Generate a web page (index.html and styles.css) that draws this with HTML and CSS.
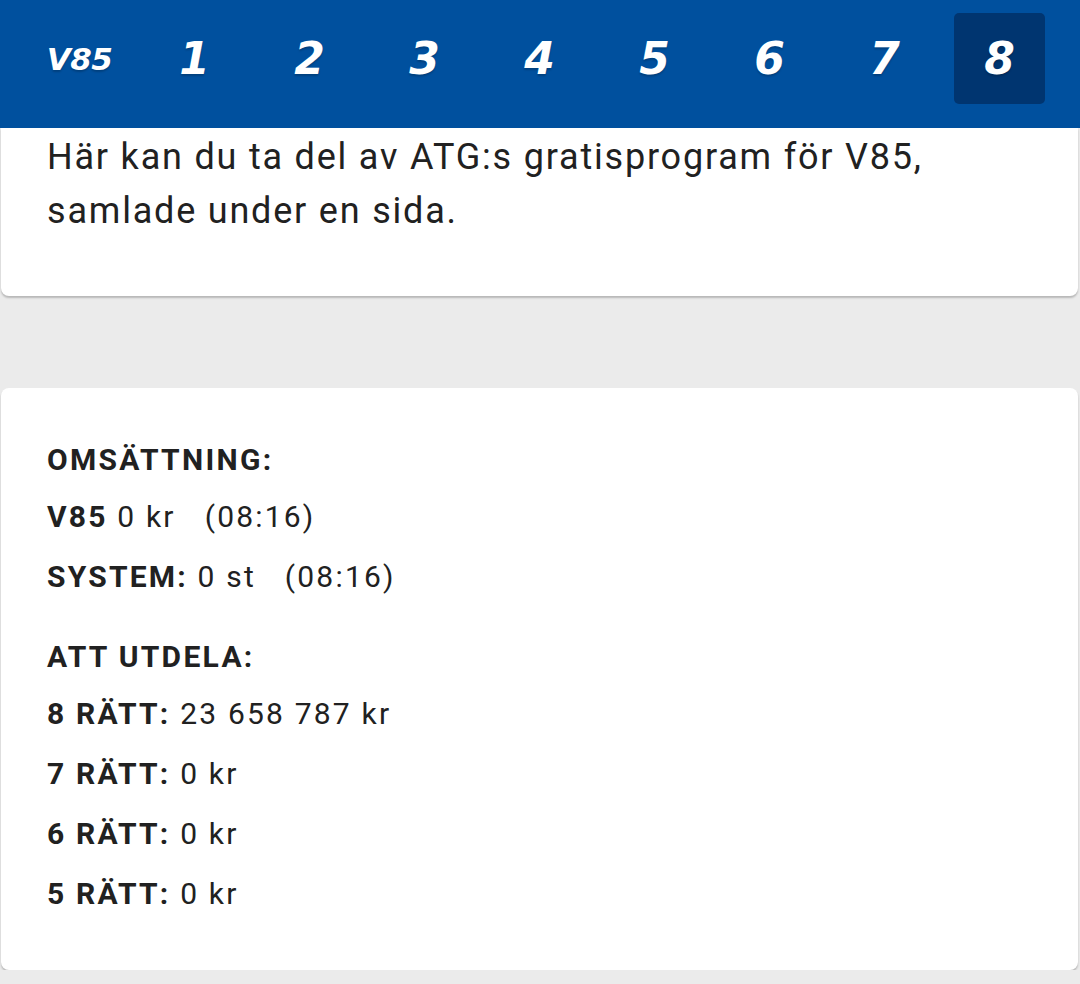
FILE: index.html
```html
<!DOCTYPE html>
<html lang="sv">
<head>
<meta charset="utf-8">
<title>V85</title>
<link rel="stylesheet" href="styles.css">
</head>
<body>
<header class="topbar">
  <nav class="tabs">
    <div class="tab tab-game">V85</div>
    <div class="tab">1</div>
    <div class="tab">2</div>
    <div class="tab">3</div>
    <div class="tab">4</div>
    <div class="tab">5</div>
    <div class="tab">6</div>
    <div class="tab">7</div>
    <div class="tab tab-active">8</div>
  </nav>
</header>
<main class="content">
  <section class="card card-intro">
    <p class="intro">Här kan du ta del av ATG:s gratisprogram för V85, samlade under en sida.</p>
  </section>
  <section class="card card-stats">
    <div class="group">
      <div class="heading">OMSÄTTNING:</div>
      <div class="row"><b>V85</b> 0 kr &nbsp; (08:16)</div>
      <div class="row"><b>SYSTEM:</b> 0 st &nbsp; (08:16)</div>
    </div>
    <div class="group">
      <div class="heading">ATT UTDELA:</div>
      <div class="row"><b>8 RÄTT:</b> 23 658 787 kr</div>
      <div class="row"><b>7 RÄTT:</b> 0 kr</div>
      <div class="row"><b>6 RÄTT:</b> 0 kr</div>
      <div class="row"><b>5 RÄTT:</b> 0 kr</div>
    </div>
  </section>
</main>
</body>
</html>
```

FILE: styles.css
```css
* { box-sizing: border-box; }
html, body {
  margin: 0;
  padding: 0;
  background: #ebebeb;
  font-family: Roboto, "Liberation Sans", Arial, sans-serif;
  color: #212121;
  overflow: hidden;
}
.topbar {
  background: #00509e;
  height: 128px;
  padding-top: 13px;
}
.tabs {
  display: flex;
  padding: 0 23px 0 22px;
}
.tab {
  flex: 1;
  height: 91px;
  margin: 0 12px;
  display: flex;
  align-items: center;
  justify-content: center;
  color: #fff;
  font-family: "DejaVu Sans", Roboto, sans-serif;
  font-weight: 700;
  font-style: italic;
  font-size: 44px;
  border-radius: 5px;
  text-shadow: 0 2px 2px rgba(0,0,0,0.2);
}
.tab-game {
  font-size: 31px;
  letter-spacing: -0.5px;
}
.tab-active {
  background: #003570;
}
.content {
  display: flex;
  flex-direction: column;
  gap: 92px;
}
.card {
  background: #fff;
  margin: 0 2px 0 1px;
  border-radius: 8px;
  box-shadow: 0 2px 2px rgba(0,0,0,0.22);
}
.card-intro {
  border-radius: 0 0 8px 8px;
  padding: 2px 46px 58px;
}
.intro {
  margin: 0;
  font-size: 36px;
  line-height: 54px;
  letter-spacing: 1.8px;
  max-width: 960px;
}
.card-stats {
  padding: 45px 46px 46px;
  display: flex;
  flex-direction: column;
  gap: 23px;
}
.heading {
  font-size: 30px;
  line-height: 54px;
  font-weight: 700;
  letter-spacing: 2.3px;
}
.row {
  font-size: 30px;
  line-height: 60px;
  letter-spacing: 2.2px;
}
.row b {
  font-weight: 700;
}
```
